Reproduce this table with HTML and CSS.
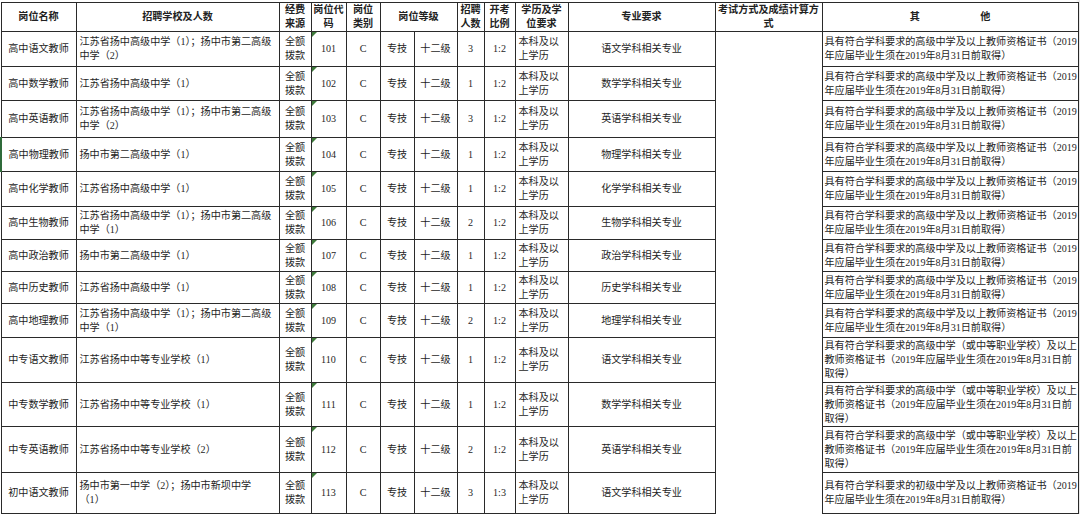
FILE: index.html
```html
<!DOCTYPE html>
<html lang="zh-CN">
<head>
<meta charset="utf-8">
<title>招聘岗位表</title>
<link rel="stylesheet" href="styles.css">
</head>
<body>
<div class="sheet">
<table class="jobs">
  <colgroup>
    <col class="c-name"><col class="c-school"><col class="c-fund"><col class="c-code"><col class="c-type">
    <col class="c-lv1"><col class="c-lv2"><col class="c-num"><col class="c-ratio"><col class="c-edu">
    <col class="c-major"><col class="c-exam"><col class="c-other">
  </colgroup>
  <thead>
    <tr class="h29 head">
      <th>岗位名称</th>
      <th>招聘学校及人数</th>
      <th>经费<br>来源</th>
      <th>岗位代<br>码</th>
      <th>岗位<br>类别</th>
      <th colspan="2">岗位等级</th>
      <th>招聘<br>人数</th>
      <th>开考<br>比例</th>
      <th>学历及学<br>位要求</th>
      <th>专业要求</th>
      <th>考试方式及成绩计算方<br>式</th>
      <th>其　　　　　　他</th>
    </tr>
  </thead>
  <tbody>
    <tr class="h35">
      <td>高中语文教师</td>
      <td class="left">江苏省扬中高级中学（1）；扬中市第二高级<br>中学（2）</td>
      <td>全额<br>拨款</td>
      <td class="code">101</td>
      <td>C</td><td>专技</td><td>十二级</td><td>3</td><td>1:2</td>
      <td class="left">本科及以<br>上学历</td>
      <td>语文学科相关专业</td>
      <td class="exam" rowspan="13"></td>
      <td class="left other">具有符合学科要求的高级中学及以上教师资格证书（2019<br>年应届毕业生须在2019年8月31日前取得）</td>
    </tr>
    <tr class="h34">
      <td>高中数学教师</td>
      <td class="left">江苏省扬中高级中学（1）</td>
      <td>全额<br>拨款</td>
      <td class="code">102</td>
      <td>C</td><td>专技</td><td>十二级</td><td>1</td><td>1:2</td>
      <td class="left">本科及以<br>上学历</td>
      <td>数学学科相关专业</td>
      <td class="left other">具有符合学科要求的高级中学及以上教师资格证书（2019<br>年应届毕业生须在2019年8月31日前取得）</td>
    </tr>
    <tr class="h37">
      <td>高中英语教师</td>
      <td class="left">江苏省扬中高级中学（1）；扬中市第二高级<br>中学（2）</td>
      <td>全额<br>拨款</td>
      <td class="code">103</td>
      <td>C</td><td>专技</td><td>十二级</td><td>3</td><td>1:2</td>
      <td class="left">本科及以<br>上学历</td>
      <td>英语学科相关专业</td>
      <td class="left other">具有符合学科要求的高级中学及以上教师资格证书（2019<br>年应届毕业生须在2019年8月31日前取得）</td>
    </tr>
    <tr class="h34">
      <td class="selected">高中物理教师</td>
      <td class="left">扬中市第二高级中学（1）</td>
      <td>全额<br>拨款</td>
      <td class="code">104</td>
      <td>C</td><td>专技</td><td>十二级</td><td>1</td><td>1:2</td>
      <td class="left">本科及以<br>上学历</td>
      <td>物理学科相关专业</td>
      <td class="left other">具有符合学科要求的高级中学及以上教师资格证书（2019<br>年应届毕业生须在2019年8月31日前取得）</td>
    </tr>
    <tr class="h35">
      <td>高中化学教师</td>
      <td class="left">江苏省扬中高级中学（1）</td>
      <td>全额<br>拨款</td>
      <td class="code">105</td>
      <td>C</td><td>专技</td><td>十二级</td><td>1</td><td>1:2</td>
      <td class="left">本科及以<br>上学历</td>
      <td>化学学科相关专业</td>
      <td class="left other">具有符合学科要求的高级中学及以上教师资格证书（2019<br>年应届毕业生须在2019年8月31日前取得）</td>
    </tr>
    <tr class="h33">
      <td>高中生物教师</td>
      <td class="left">江苏省扬中高级中学（1）；扬中市第二高级<br>中学（1）</td>
      <td>全额<br>拨款</td>
      <td class="code">106</td>
      <td>C</td><td>专技</td><td>十二级</td><td>2</td><td>1:2</td>
      <td class="left">本科及以<br>上学历</td>
      <td>生物学科相关专业</td>
      <td class="left other">具有符合学科要求的高级中学及以上教师资格证书（2019<br>年应届毕业生须在2019年8月31日前取得）</td>
    </tr>
    <tr class="h32">
      <td>高中政治教师</td>
      <td class="left">扬中市第二高级中学（1）</td>
      <td>全额<br>拨款</td>
      <td class="code">107</td>
      <td>C</td><td>专技</td><td>十二级</td><td>1</td><td>1:2</td>
      <td class="left">本科及以<br>上学历</td>
      <td>政治学科相关专业</td>
      <td class="left other">具有符合学科要求的高级中学及以上教师资格证书（2019<br>年应届毕业生须在2019年8月31日前取得）</td>
    </tr>
    <tr class="h32">
      <td>高中历史教师</td>
      <td class="left">江苏省扬中高级中学（1）</td>
      <td>全额<br>拨款</td>
      <td class="code">108</td>
      <td>C</td><td>专技</td><td>十二级</td><td>1</td><td>1:2</td>
      <td class="left">本科及以<br>上学历</td>
      <td>历史学科相关专业</td>
      <td class="left other">具有符合学科要求的高级中学及以上教师资格证书（2019<br>年应届毕业生须在2019年8月31日前取得）</td>
    </tr>
    <tr class="h34">
      <td>高中地理教师</td>
      <td class="left">江苏省扬中高级中学（1）；扬中市第二高级<br>中学（1）</td>
      <td>全额<br>拨款</td>
      <td class="code">109</td>
      <td>C</td><td>专技</td><td>十二级</td><td>2</td><td>1:2</td>
      <td class="left">本科及以<br>上学历</td>
      <td>地理学科相关专业</td>
      <td class="left other">具有符合学科要求的高级中学及以上教师资格证书（2019<br>年应届毕业生须在2019年8月31日前取得）</td>
    </tr>
    <tr class="h45">
      <td>中专语文教师</td>
      <td class="left">江苏省扬中中等专业学校（1）</td>
      <td>全额<br>拨款</td>
      <td class="code">110</td>
      <td>C</td><td>专技</td><td>十二级</td><td>1</td><td>1:2</td>
      <td class="left">本科及以<br>上学历</td>
      <td>语文学科相关专业</td>
      <td class="left other">具有符合学科要求的高级中学（或中等职业学校）及以上<br>教师资格证书（2019年应届毕业生须在2019年8月31日前<br>取得）</td>
    </tr>
    <tr class="h44">
      <td>中专数学教师</td>
      <td class="left">江苏省扬中中等专业学校（1）</td>
      <td>全额<br>拨款</td>
      <td class="code">111</td>
      <td>C</td><td>专技</td><td>十二级</td><td>1</td><td>1:2</td>
      <td class="left">本科及以<br>上学历</td>
      <td>数学学科相关专业</td>
      <td class="left other">具有符合学科要求的高级中学（或中等职业学校）及以上<br>教师资格证书（2019年应届毕业生须在2019年8月31日前<br>取得）</td>
    </tr>
    <tr class="h46">
      <td>中专英语教师</td>
      <td class="left">江苏省扬中中等专业学校（2）</td>
      <td>全额<br>拨款</td>
      <td class="code">112</td>
      <td>C</td><td>专技</td><td>十二级</td><td>2</td><td>1:2</td>
      <td class="left">本科及以<br>上学历</td>
      <td>英语学科相关专业</td>
      <td class="left other">具有符合学科要求的高级中学（或中等职业学校）及以上<br>教师资格证书（2019年应届毕业生须在2019年8月31日前<br>取得）</td>
    </tr>
    <tr class="h41">
      <td>初中语文教师</td>
      <td class="left">扬中市第一中学（2）；扬中市新坝中学<br>（1）</td>
      <td>全额<br>拨款</td>
      <td class="code">113</td>
      <td>C</td><td>专技</td><td>十二级</td><td>3</td><td>1:3</td>
      <td class="left">本科及以<br>上学历</td>
      <td>语文学科相关专业</td>
      <td class="left other">具有符合学科要求的初级中学及以上教师资格证书（2019<br>年应届毕业生须在2019年8月31日前取得）</td>
    </tr>
  </tbody>
</table>
</div>
</body>
</html>
```

FILE: styles.css
```css
html, body {
  margin: 0;
  padding: 0;
  background: #ffffff;
}

.sheet {
  padding-top: 2px;
  width: 1080px;
  height: 514px;
  overflow: hidden;
  box-sizing: border-box;
  background: linear-gradient(to right, #ffffff 1076px, #e4e4e4 1080px);
}

.jobs {
  table-layout: fixed;
  border-collapse: collapse;
  width: 1078px;
  font-family: "Liberation Serif", "Noto Sans CJK SC", serif;
  font-size: 10.1px;
  line-height: 14px;
  color: #1e1e1e;
  background: #ffffff;
}

.c-name { width: 75px; }
.c-school { width: 203px; }
.c-fund { width: 32px; }
.c-code { width: 35px; }
.c-type { width: 34px; }
.c-lv1 { width: 34px; }
.c-lv2 { width: 43px; }
.c-num { width: 27px; }
.c-ratio { width: 31px; }
.c-edu { width: 53px; }
.c-major { width: 147px; }
.c-exam { width: 107px; }
.c-other { width: 256px; }

.jobs th,
.jobs td {
  border: 1px solid #2a2a2a;
  padding: 0;
  text-align: center;
  vertical-align: middle;
  white-space: nowrap;
  overflow: hidden;
}

.jobs th {
  font-weight: 700;
  color: #222;
}

.jobs td.left {
  text-align: left;
  padding-left: 3px;
}

.jobs td.other {
  padding-left: 2px;
}

.jobs td.exam {
  border-bottom: none;
}

.jobs td.code {
  position: relative;
}

.jobs td.code::before {
  content: "";
  position: absolute;
  top: 0;
  left: 0;
  width: 0;
  height: 0;
  border-top: 5px solid #3d7a3a;
  border-right: 5px solid transparent;
}

.jobs td.selected {
  border-left: 2px solid #2f6b3a;
}

.h29 { height: 29px; }
.h32 { height: 32px; }
.h33 { height: 33px; }
.h34 { height: 34px; }
.h35 { height: 35px; }
.h37 { height: 37px; }
.h41 { height: 41px; }
.h44 { height: 44px; }
.h45 { height: 45px; }
.h46 { height: 46px; }
```
